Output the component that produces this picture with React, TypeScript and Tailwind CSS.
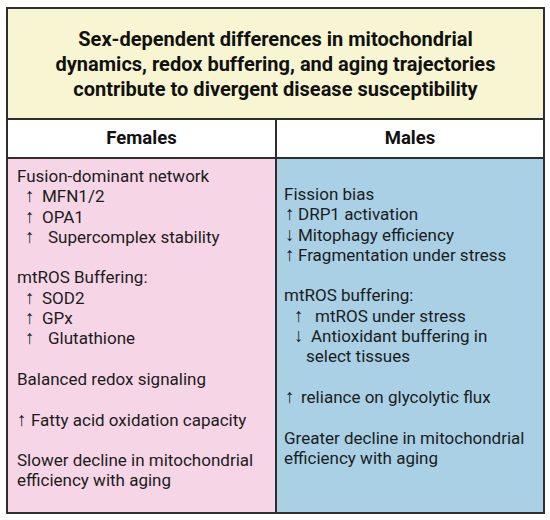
type Line = { t: string; pad?: string; a?: string; box?: string };

const females: Line[] = [
  { t: 'Fusion-dominant network' },
  { t: 'MFN1/2', pad: 'pl-[8px]', a: '↑', box: 'w-[17px]' },
  { t: 'OPA1', pad: 'pl-[8px]', a: '↑', box: 'w-[17px]' },
  { t: 'Supercomplex stability', pad: 'pl-[8px]', a: '↑', box: 'w-[23px]' },
  { t: '' },
  { t: 'mtROS Buffering:' },
  { t: 'SOD2', pad: 'pl-[8px]', a: '↑', box: 'w-[17px]' },
  { t: 'GPx', pad: 'pl-[8px]', a: '↑', box: 'w-[17px]' },
  { t: 'Glutathione', pad: 'pl-[8px]', a: '↑', box: 'w-[23px]' },
  { t: '' },
  { t: 'Balanced redox signaling' },
  { t: '' },
  { t: 'Fatty acid oxidation capacity', a: '↑', box: 'w-[14px]' },
  { t: '' },
  { t: 'Slower decline in mitochondrial' },
  { t: 'efficiency with aging' },
];

const males: Line[] = [
  { t: 'Fission bias' },
  { t: 'DRP1 activation', pad: 'pl-[1px]', a: '↑', box: 'w-[13px]' },
  { t: 'Mitophagy efficiency', pad: 'pl-[1px]', a: '↓', box: 'w-[13px]' },
  { t: 'Fragmentation under stress', pad: 'pl-[1px]', a: '↑', box: 'w-[13px]' },
  { t: '' },
  { t: 'mtROS buffering:' },
  { t: 'mtROS under stress', pad: 'pl-[10px]', a: '↑', box: 'w-[21px]' },
  { t: 'Antioxidant buffering in', pad: 'pl-[10px]', a: '↓', box: 'w-[17px]' },
  { t: 'select tissues', pad: 'pl-[22px]' },
  { t: '' },
  { t: 'reliance on glycolytic flux', pad: 'pl-[1px]', a: '↑', box: 'w-[16px]' },
  { t: '' },
  { t: 'Greater decline in mitochondrial' },
  { t: 'efficiency with aging' },
];

function Lines({ items }: { items: Line[] }) {
  return (
    <div className="flex flex-col text-[17px] leading-[20.3px] text-[#1c1c1c]">
      {items.map((l, i) => (
        <div key={i} className={`h-[20.3px] flex items-baseline whitespace-nowrap ${l.pad ?? ''}`}>
          {l.a && (
            <span className={`inline-block shrink-0 text-[19px] leading-[14px] ${l.box ?? ''}`}>
              {l.a}
            </span>
          )}
          <span>{l.t}</span>
        </div>
      ))}
    </div>
  );
}

export default function App() {
  return (
    <div className="w-[550px] h-[520px] bg-white pt-[7px] pl-[6px] font-['Roboto',sans-serif]">
      <div className="w-[539px] h-[507px] border-2 border-[#2e2e2e] flex flex-col">
        <div className="h-[111px] bg-[#f8f6d2] border-b-2 border-[#2e2e2e] flex items-center justify-center text-center">
          <h1 className="text-[20px] leading-[25px] font-bold text-[#111] pt-[2px]">
            Sex-dependent differences in mitochondrial
            <br />
            dynamics, redox buffering, and aging trajectories
            <br />
            contribute to divergent disease susceptibility
          </h1>
        </div>
        <div className="grid grid-cols-[269px_1fr] h-[39px] border-b-2 border-[#2e2e2e] bg-white">
          <div className="border-r-2 border-[#2e2e2e] flex items-center justify-center text-[18.5px] font-bold text-[#111]">
            Females
          </div>
          <div className="flex items-center justify-center text-[18.5px] font-bold text-[#111]">
            Males
          </div>
        </div>
        <div className="grid grid-cols-[269px_1fr] flex-1">
          <div className="bg-[#f6d6e6] border-r-2 border-[#2e2e2e] pl-[9px] pt-[7px]">
            <Lines items={females} />
          </div>
          <div className="bg-[#a9d0e4] pl-[7px] pt-[25px]">
            <Lines items={males} />
          </div>
        </div>
      </div>
    </div>
  );
}
